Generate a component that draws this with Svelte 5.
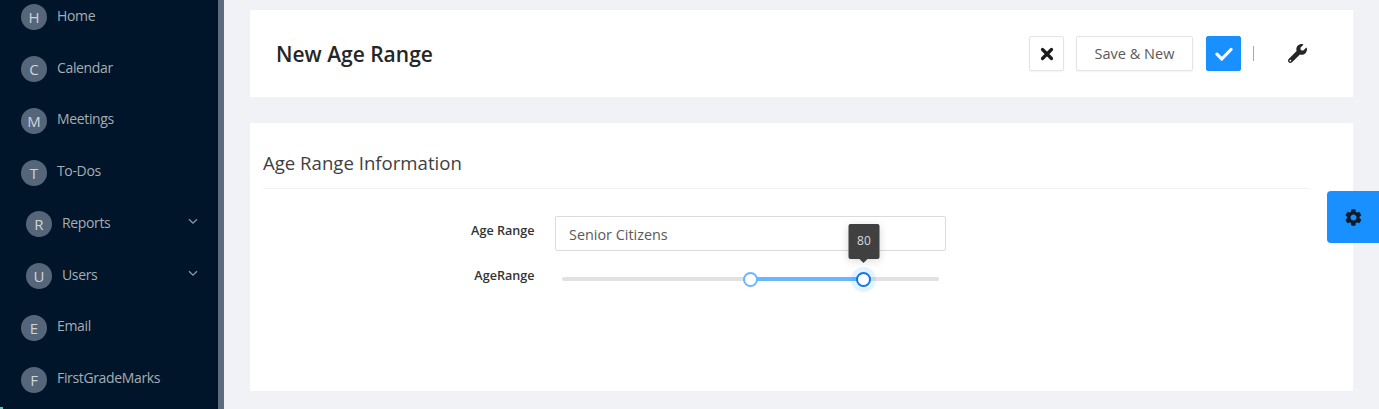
<script lang="ts">
  const menu = [
    { letter: 'H', label: 'Home' },
    { letter: 'C', label: 'Calendar' },
    { letter: 'M', label: 'Meetings' },
    { letter: 'T', label: 'To-Dos' },
    { letter: 'R', label: 'Reports', sub: true },
    { letter: 'U', label: 'Users', sub: true },
    { letter: 'E', label: 'Email' },
    { letter: 'F', label: 'FirstGradeMarks' },
  ];

  let low = $state(50);
  let high = $state(80);
</script>

<div class="page">
  <aside class="sidebar">
    <ul class="menu">
      {#each menu as item}
        <li class="menu-item" class:menu-item--sub={item.sub}>
          <span class="avatar">{item.letter}</span>
          <span class="menu-label">{item.label}</span>
          {#if item.sub}
            <svg class="chevron" viewBox="0 0 10 7" width="10" height="7">
              <path d="M1 1.2 5 5.2l4-4" fill="none" stroke="currentColor" stroke-width="1.3" />
            </svg>
          {/if}
        </li>
      {/each}
    </ul>
    <div class="teal-mark"></div>
  </aside>
  <div class="scrollbar"></div>

  <main class="content">
    <header class="card title-bar">
      <h1>New Age Range</h1>
      <div class="actions">
        <button class="btn btn--icon" aria-label="Cancel">
          <svg viewBox="0 0 14 14" width="14" height="14">
            <path d="M2.5 2.5l9 9M11.5 2.5l-9 9" stroke="#1c1c1c" stroke-width="3.2" stroke-linecap="round" fill="none" />
          </svg>
        </button>
        <button class="btn btn--text">Save &amp; New</button>
        <button class="btn btn--icon btn--primary" aria-label="Save">
          <svg viewBox="0 0 18 14" width="18" height="14">
            <path d="M2 7.2 6.8 12 16 2.5" stroke="#fff" stroke-width="3.2" fill="none" stroke-linecap="round" stroke-linejoin="round" />
          </svg>
        </button>
        <span class="divider"></span>
        <button class="btn-plain" aria-label="Tools">
          <svg viewBox="0 0 512 512" width="19" height="19">
            <path fill="#262626" d="M507.7 109.1c-2.2-9-13.5-12.1-20.1-5.5l-74.4 74.4-67.9-11.3-11.3-67.9 74.4-74.4c6.6-6.6 3.4-17.9-5.7-20.2-47.4-11.7-99.5.9-136.6 38-39.7 39.7-50.7 97.1-34.6 147.2L18.7 402.8c-25 25-25 65.5 0 90.5 25 25 65.5 25 90.5 0l213-213c50.1 16.7 107.5 5.7 147.4-34.2 37.1-37.1 49.7-89.3 38.1-136.9zM64 472c-13.2 0-24-10.8-24-24 0-13.3 10.7-24 24-24s24 10.7 24 24c0 13.2-10.7 24-24 24z" />
          </svg>
        </button>
      </div>
    </header>

    <section class="card form-card">
      <h2>Age Range Information</h2>
      <div class="form">
        <div class="field">
          <span class="field-label">Age Range</span>
          <input class="text-input" value="Senior Citizens" />
        </div>
        <div class="field field--slider">
          <span class="field-label">AgeRange</span>
          <div class="slider">
            <div class="track"></div>
            <div class="track-fill" style="left:{low}%;width:{high - low}%"></div>
            <span class="handle" style="left:{low}%"></span>
            <span class="handle handle--active" style="left:{high}%">
              <span class="tip">{high}</span>
            </span>
          </div>
        </div>
      </div>
    </section>
  </main>

  <button class="settings-tab" aria-label="Settings">
    <svg viewBox="0 0 24 24" width="19" height="19">
      <path fill="#0d1b2a" d="M21.4 14.2l-1.9-1.1c.2-.7.2-1.5 0-2.2l1.9-1.1c.3-.2.4-.5.3-.8-.5-1.5-1.3-2.9-2.4-4.1-.2-.2-.6-.3-.8-.1l-1.9 1.1c-.6-.5-1.2-.9-1.9-1.1V2.6c0-.3-.2-.6-.5-.7-1.5-.3-3.2-.3-4.7 0-.3.1-.5.4-.5.7v2.2c-.7.2-1.4.6-1.9 1.1L5.2 4.8c-.3-.2-.6-.1-.8.1-1.1 1.2-1.9 2.6-2.4 4.1-.1.3 0 .6.3.8l1.9 1.1c-.2.7-.2 1.5 0 2.2l-1.9 1.1c-.3.2-.4.5-.3.8.5 1.5 1.3 2.9 2.4 4.1.2.2.6.3.8.1l1.9-1.1c.6.5 1.2.9 1.9 1.1v2.2c0 .3.2.6.5.7 1.5.3 3.2.3 4.7 0 .3-.1.5-.4.5-.7v-2.2c.7-.2 1.4-.6 1.9-1.1l1.9 1.1c.3.2.6.1.8-.1 1.1-1.2 1.9-2.6 2.4-4.1.1-.3 0-.6-.3-.8zM12 15.8c-2.1 0-3.8-1.7-3.8-3.8s1.7-3.8 3.8-3.8 3.800 1.7 3.800 3.800-1.700 3.800-3.800 3.800z" />
    </svg>
  </button>
</div>

<style>
  :global(body) {
    margin: 0;
    overflow: hidden;
    font-family: "Open Sans", "Noto Sans", sans-serif;
  }

  .page {
    position: relative;
    display: flex;
    height: 409px;
    overflow: hidden;
    background: #f0f2f5;
  }

  .sidebar {
    position: relative;
    flex: 0 0 218px;
    background: #001529;
    overflow: hidden;
  }

  .scrollbar {
    flex: 0 0 6px;
    background: #5d6d7e;
  }

  .menu {
    list-style: none;
    margin: -9.4px 0 0;
    padding: 0;
  }

  .menu-item {
    display: flex;
    align-items: center;
    height: 51.75px;
    padding-left: 21px;
    color: #a6adb4;
    font-size: 14px;
  }

  .menu-item--sub {
    padding-left: 26px;
  }

  .avatar {
    flex: 0 0 26px;
    height: 26px;
    border-radius: 50%;
    background: #56667a;
    color: #d0d4d9;
    font-size: 15px;
    display: flex;
    align-items: center;
    justify-content: center;
    margin-right: 10px;
    transform: translateY(1px);
  }

  .menu-label {
    transform: translateY(-1px);
    letter-spacing: -0.35px;
  }

  .chevron {
    position: absolute;
    left: 188px;
    margin-top: -4px;
    color: #8f98a1;
  }

  .teal-mark {
    position: absolute;
    left: 0;
    bottom: 0;
    width: 3px;
    height: 2px;
    background: #5fc9b0;
  }

  .content {
    flex: 1;
    padding: 10px 26px 0;
    min-width: 0;
  }

  .card {
    background: #fff;
  }

  .title-bar {
    height: 87px;
    display: flex;
    align-items: center;
    justify-content: space-between;
    padding: 0 46px 0 26px;
    margin-bottom: 26px;
  }

  h1 {
    margin: 0;
    font-size: 21px;
    font-weight: 600;
    color: #262626;
  }

  .actions {
    display: flex;
    align-items: center;
  }

  .btn {
    height: 35px;
    background: #fff;
    border: 1px solid #e4e4e4;
    border-radius: 2px;
    box-shadow: 0 1px 2px rgba(0, 0, 0, 0.05);
    font: inherit;
    padding: 0;
    display: flex;
    align-items: center;
    justify-content: center;
  }

  .btn--icon {
    width: 35px;
  }

  .btn--text {
    width: 117px;
    margin: 0 13px 0 12px;
    font-size: 14.5px;
    color: #595959;
  }

  .btn--primary {
    background: #1890ff;
    border-color: #1890ff;
  }

  .divider {
    width: 1px;
    height: 15px;
    background: #a8a8a8;
    margin: 0 0 0 12px;
  }

  .btn-plain {
    background: none;
    border: 0;
    padding: 0;
    margin-left: 34px;
    display: flex;
  }

  .form-card {
    height: 268px;
    padding: 0 43px 0 13px;
  }

  h2 {
    margin: 0;
    height: 65px;
    line-height: 79px;
    font-size: 18.6px;
    font-weight: 400;
    color: #3f3f3f;
    border-bottom: 1px solid #f3f3f3;
  }

  .form {
    padding-top: 27px;
  }

  .field {
    display: flex;
    align-items: center;
    height: 35px;
  }

  .field--slider {
    height: 22px;
    margin-top: 17px;
  }

  .field-label {
    width: 271.5px;
    flex: none;
    text-align: right;
    font-size: 12.6px;
    font-weight: 600;
    color: #333;
    transform: translateY(-3px);
  }

  .field--slider .field-label {
    transform: translateY(-4px);
  }

  .text-input {
    box-sizing: border-box;
    margin-left: 20.5px;
    width: 391px;
    height: 35px;
    border: 1px solid #dcdcdc;
    border-radius: 2px;
    padding: 2px 13px 0;
    font: inherit;
    font-size: 14.4px;
    color: #595959;
    background: #fff;
  }

  .slider {
    position: relative;
    margin-left: 27.5px;
    width: 377px;
    height: 4px;
  }

  .track {
    position: absolute;
    inset: 0;
    border-radius: 2px;
    background: #e1e1e1;
  }

  .track-fill {
    position: absolute;
    top: 0;
    height: 4px;
    background: #69b7ff;
  }

  .handle {
    position: absolute;
    top: 2px;
    box-sizing: border-box;
    width: 15px;
    height: 15px;
    margin: -7.5px 0 0 -7.2px;
    border-radius: 50%;
    background: #fff;
    border: 2px solid #69b7ff;
  }

  .handle--active {
    border-color: #1177e0;
    box-shadow: 0 0 0 5px rgba(24, 144, 255, 0.12);
  }

  .tip {
    position: absolute;
    left: 50%;
    bottom: 26px;
    transform: translateX(-50%);
    width: 31px;
    height: 35px;
    border-radius: 2px;
    background: #404040;
    color: #d9d9d9;
    font-size: 12px;
    line-height: 34px;
    text-align: center;
    box-shadow: 0 2px 8px rgba(0, 0, 0, 0.15);
  }

  .tip::after {
    content: '';
    position: absolute;
    left: 50%;
    top: 100%;
    margin-left: -4px;
    border: 4px solid transparent;
    border-bottom: 0;
    border-top-color: #404040;
  }

  .settings-tab {
    position: absolute;
    left: 1327px;
    top: 191px;
    width: 52px;
    height: 52px;
    padding: 0;
    border: 0;
    border-radius: 4px 0 0 4px;
    background: #1890ff;
    display: flex;
    align-items: center;
    justify-content: center;
  }
</style>
